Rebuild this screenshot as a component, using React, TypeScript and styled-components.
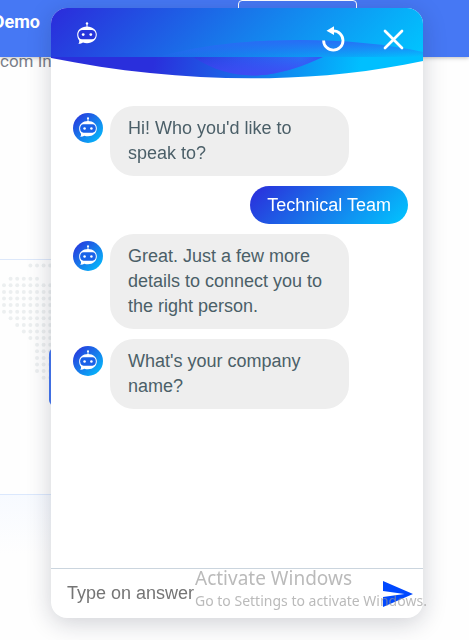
import React from "react";
import styled, { createGlobalStyle } from "styled-components";

const GlobalStyle = createGlobalStyle`
  * { box-sizing: border-box; }
  html, body, #root { height: 100%; }
  body {
    margin: 0;
    overflow: hidden;
    background: #fefefe;
    font-family: "Liberation Sans", Arial, sans-serif;
  }
  button { border: 0; padding: 0; background: none; cursor: pointer; }
`;

const brandGradient = "linear-gradient(135deg, #2b2bdb 0%, #1877ea 48%, #00c6ff 100%)";

/* ---------- page behind the chat ---------- */

const Site = styled.div`
  display: flex;
  flex-direction: column;
  height: 100%;
  font-family: Roboto, sans-serif;
`;

const SiteBar = styled.header`
  position: relative;
  display: flex;
  justify-content: space-between;
  flex: none;
  height: 57px;
  padding-right: 112px;
  background: #4678f4;
  box-shadow: 0 1px 4px rgba(0, 0, 0, 0.25);
`;

const SiteLink = styled.a`
  display: flex;
  justify-content: flex-end;
  width: 40px;
  color: #fff;
  font-size: 18px;
  font-weight: 700;
  line-height: 44px;
  text-decoration: none;
`;

const OutlineButton = styled.button`
  width: 119px;
  height: 40px;
  border: 1px solid #fff;
  border-radius: 4px;
`;

const SiteText = styled.p`
  flex: none;
  height: 202px;
  margin: 0;
  color: #7b7f8b;
  font-size: 17px;
  line-height: 8px;
  white-space: nowrap;
`;

const MapSection = styled.section`
  display: flex;
  align-items: flex-start;
  flex: none;
  width: 80px;
  height: 235px;
  border-top: 1px solid #dde8fa;
`;

const MapMarker = styled.span`
  flex: none;
  width: 24px;
  height: 58px;
  margin-top: 88px;
  margin-left: -11px;
  border-radius: 6px;
  background: #4678f4;
`;

const FadeSection = styled.section`
  flex: none;
  width: 80px;
  height: 60px;
  border-top: 1px solid #dbe8fd;
  background: linear-gradient(#f7faff, #fefefe);
`;

/* ---------- chat window ---------- */

const ChatWindow = styled.main`
  position: fixed;
  top: 8px;
  right: 46px;
  bottom: 22px;
  left: 51px;
  display: flex;
  flex-direction: column;
  border-radius: 16px;
  background: #fff;
  box-shadow: 0 5px 24px rgba(20, 25, 50, 0.2);
`;

const ChatHeader = styled.header`
  position: relative;
  display: flex;
  align-items: center;
  flex: none;
  height: 49px;
  padding: 0 17px 0 26px;
  border-radius: 16px 16px 0 0;
  background: ${brandGradient};
`;

const Wave = styled.svg`
  position: absolute;
  top: 0;
  left: 0;
  width: 100%;
  height: 72px;
  pointer-events: none;
`;

const HeaderActions = styled.div`
  position: relative;
  display: flex;
  gap: 34px;
  margin-left: auto;
  padding-top: 12px;
`;

const IconButton = styled.button`
  display: flex;
  width: 26px;
  height: 26px;
`;

const Messages = styled.ol`
  display: flex;
  flex: 1;
  flex-direction: column;
  gap: 10px;
  min-height: 0;
  margin: 0;
  padding: 49px 15px 10px 22px;
  list-style: none;
`;

const MessageRow = styled.li<{ $own?: boolean }>`
  display: flex;
  align-items: flex-start;
  justify-content: ${(p) => (p.$own ? "flex-end" : "flex-start")};
  gap: 7px;
`;

const Avatar = styled.span`
  display: flex;
  align-items: center;
  justify-content: center;
  flex: none;
  width: 30px;
  height: 30px;
  margin-top: 7px;
  padding-bottom: 2px;
  border-radius: 50%;
  background: ${brandGradient};
`;

const Bubble = styled.p<{ $own?: boolean }>`
  max-width: 239px;
  margin: 0;
  padding: ${(p) => (p.$own ? "10px 17px" : "10px 18px")};
  border-radius: 24px;
  background: ${(p) => (p.$own ? brandGradient : "#eeeeee")};
  color: ${(p) => (p.$own ? "#fff" : "#4b5f68")};
  font-size: 18px;
  line-height: ${(p) => (p.$own ? "18px" : "25px")};
`;

const Composer = styled.form`
  display: flex;
  align-items: center;
  flex: none;
  height: 50px;
  padding: 0 10px 0 16px;
  border-top: 1px solid #cbd5de;
`;

const AnswerInput = styled.input`
  flex: 1;
  min-width: 0;
  padding: 0 0 2px;
  border: 0;
  outline: 0;
  background: transparent;
  font: 18px/24px "Liberation Sans", Arial, sans-serif;
  color: #333;
  &::placeholder { color: #757575; opacity: 1; }
`;

const SendButton = styled.button`
  display: flex;
  width: 30px;
  height: 26px;
`;

const Watermark = styled.aside`
  position: fixed;
  right: 38px;
  bottom: 29px;
  width: 236px;
  color: rgba(150, 150, 150, 0.66);
  font-family: "Noto Sans", "Open Sans", sans-serif;
  font-size: 14px;
  line-height: 20px;
  white-space: nowrap;
  pointer-events: none;
`;

const WatermarkTitle = styled.div`
  font-size: 19px;
  line-height: 25px;
`;

/* row, first column and last column of each line of map dots */
const dotRows: Array<[number, number, number]> = [
  [0, 4, 7], [2, 1, 5], [3, 0, 7], [4, 0, 7], [5, 0, 7], [6, 0, 7], [7, 0, 7],
  [8, 1, 7], [9, 2, 7], [10, 3, 7], [11, 4, 7], [12, 5, 7], [13, 5, 7],
  [14, 5, 7], [15, 5, 7], [16, 5, 7], [17, 6, 7],
];

function DottedMap() {
  return (
    <svg width="60" height="130" fill="#eceff0" aria-hidden="true">
      {dotRows.flatMap(([row, from, to]) =>
        Array.from({ length: to - from + 1 }, (_, i) => (
          <circle key={`${row}-${i}`} cx={4 + (from + i) * 6.6} cy={5.5 + row * 6.6} r="2" />
        ))
      )}
    </svg>
  );
}

function BotIcon({ width, height, face }: { width: number; height: number; face: string }) {
  return (
    <svg width={width} height={height} viewBox="0 0 20 22" aria-hidden="true">
      <circle cx="10" cy="1.4" r="1.2" fill="#fff" />
      <path d="M10 1.5V6" stroke="#fff" strokeWidth="1" />
      <path
        fill="#fff"
        d="M10 4.4C15.8 4.4 19.8 8 19.8 12.6C19.8 17.6 15.4 21.2 10 21.2C8.5 21.2 7.2 21 6 20.6C4.6 21.6 3 21.9 1.3 21.8C2.3 20.6 2.5 19.5 2.1 18.2C.8 16.7.2 14.8.2 12.6C.2 8 4.2 4.4 10 4.4Z"
      />
      <path fill={face} d="M5 8H15C17.5 8 18.7 10.2 18.7 12.7C18.7 15.3 17.3 17.3 15 17.3H5C2.7 17.3 1.3 15.3 1.3 12.7C1.3 10.2 2.5 8 5 8Z" />
      <circle cx="6.2" cy="12.6" r="1.4" fill="#fff" />
      <circle cx="13.8" cy="12.6" r="1.4" fill="#fff" />
    </svg>
  );
}

function HeaderWave() {
  return (
    <Wave viewBox="0 0 372 72" preserveAspectRatio="none" aria-hidden="true">
      <defs>
        <linearGradient id="base" gradientUnits="userSpaceOnUse" x1="105" y1="45" x2="300" y2="95">
          <stop offset="0" stopColor="#2a2fdc" />
          <stop offset="0.5" stopColor="#1674ea" />
          <stop offset="1" stopColor="#00bfff" />
        </linearGradient>
        <linearGradient id="crest" x1="0" y1="0" x2="0" y2="1">
          <stop offset="0" stopColor="#2b68f6" stopOpacity="0.9" />
          <stop offset="1" stopColor="#2b68f6" stopOpacity="0.05" />
        </linearGradient>
        <linearGradient id="bowl" gradientUnits="userSpaceOnUse" x1="140" y1="60" x2="270" y2="50">
          <stop offset="0" stopColor="#2b3ce0" />
          <stop offset="0.4" stopColor="#2e54ee" />
          <stop offset="0.85" stopColor="#2c6cf6" />
          <stop offset="1" stopColor="#3558f6" />
        </linearGradient>
        <linearGradient id="bowlEdge" gradientUnits="userSpaceOnUse" x1="0" y1="50" x2="0" y2="69">
          <stop offset="0" stopColor="#404af4" stopOpacity="0" />
          <stop offset="1" stopColor="#404af4" />
        </linearGradient>
      </defs>
      <path fill="url(#base)" d="M0 49H372V53C250 79 120 74 0 50Z" />
      <path fill="url(#bowl)" d="M142 49C180 73 218 74 272 49Z" />
      <path fill="url(#bowlEdge)" d="M142 49C180 73 218 74 272 49Z" />
      <path fill="url(#crest)" d="M108 49C170 30 285 25 372 44V49Z" />
    </Wave>
  );
}

const conversation = [
  { text: "Hi! Who you'd like to speak to?" },
  { text: "Technical Team", own: true },
  { text: "Great. Just a few more details to connect you to the right person." },
  { text: "What's your company name?" },
];

export default function App() {
  return (
    <>
      <GlobalStyle />
      <Site>
        <SiteBar>
          <SiteLink href="#demo">Demo</SiteLink>
          <OutlineButton type="button" aria-label="Get started" />
        </SiteBar>
        <SiteText>com In</SiteText>
        <MapSection>
          <DottedMap />
          <MapMarker />
        </MapSection>
        <FadeSection />
      </Site>

      <ChatWindow>
        <ChatHeader>
          <HeaderWave />
          <BotIcon width={20} height={22} face="#2735db" />
          <HeaderActions>
            <IconButton type="button" aria-label="Restart chat">
              <svg width="26" height="26" viewBox="0 0 26 26" aria-hidden="true">
                <path d="M3.6 14.5A9.7 9.7 0 1 0 13.3 4.8" fill="none" stroke="#fff" strokeWidth="2.8" />
                <path d="M6.5 4.7L14 .3V9Z" fill="#fff" />
              </svg>
            </IconButton>
            <IconButton type="button" aria-label="Close chat">
              <svg width="26" height="26" viewBox="0 0 26 26" aria-hidden="true">
                <path d="M5 5L22 22M22 5L5 22" stroke="#fff" strokeWidth="2.7" strokeLinecap="round" />
              </svg>
            </IconButton>
          </HeaderActions>
        </ChatHeader>

        <Messages>
          {conversation.map(({ text, own }) => (
            <MessageRow key={text} $own={own}>
              {!own && (
                <Avatar>
                  <BotIcon width={18} height={20} face="#1a62e8" />
                </Avatar>
              )}
              <Bubble $own={own}>{text}</Bubble>
            </MessageRow>
          ))}
        </Messages>

        <Composer onSubmit={(e) => e.preventDefault()}>
          <AnswerInput type="text" aria-label="Your answer" placeholder="Type on answer" />
          <SendButton type="submit" aria-label="Send">
            <svg width="30" height="26" viewBox="2 3 21 18" preserveAspectRatio="none" aria-hidden="true">
              <path fill="#0048ff" d="M2 21L23 12 2 3V10L17 12 2 14Z" />
            </svg>
          </SendButton>
        </Composer>
      </ChatWindow>

      <Watermark>
        <WatermarkTitle>Activate Windows</WatermarkTitle>
        Go to Settings to activate Windows.
      </Watermark>
    </>
  );
}
